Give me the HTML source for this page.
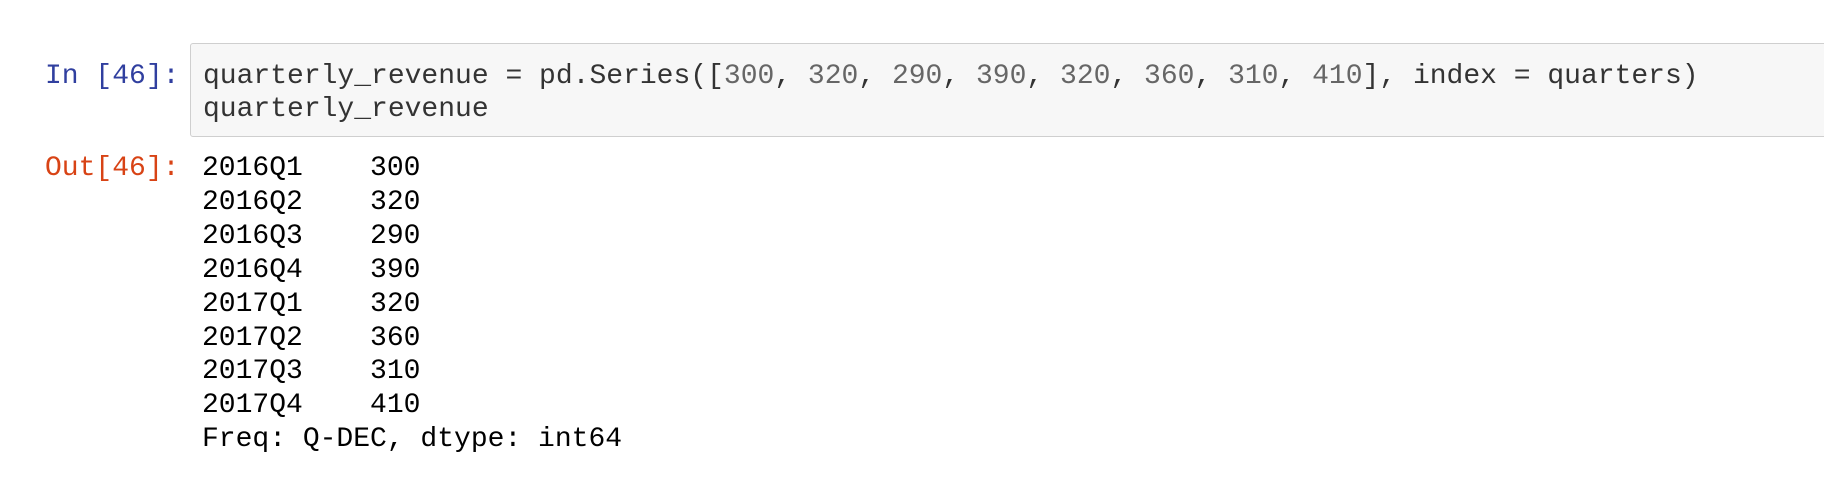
<!DOCTYPE html>
<html><head><style>
html,body{margin:0;padding:0;background:#fff;width:1824px;height:488px;overflow:hidden;position:relative}
.m{font-family:"Liberation Mono",monospace;font-size:28px;white-space:pre;position:absolute;margin:0}
.box{position:absolute;left:190px;top:43px;width:1660px;height:92px;background:#f7f7f7;border:1px solid #cfcfcf;border-radius:3px}
.in{color:#303f9f;left:45px;top:60px;line-height:33px}
.out{color:#d84315;left:45px;top:152px;line-height:33.9px}
.code{left:203px;top:60px;line-height:33px;color:#333}
.n{color:#666}
.o{left:202px;top:152px;line-height:33.9px;color:#000}
</style></head><body>
<div class="box"></div>
<div class="m in">In [46]:</div>
<div class="m code">quarterly_revenue = pd.Series([<span class="n">300</span>, <span class="n">320</span>, <span class="n">290</span>, <span class="n">390</span>, <span class="n">320</span>, <span class="n">360</span>, <span class="n">310</span>, <span class="n">410</span>], index = quarters)
quarterly_revenue</div>
<div class="m out">Out[46]:</div>
<div class="m o">2016Q1    300
2016Q2    320
2016Q3    290
2016Q4    390
2017Q1    320
2017Q2    360
2017Q3    310
2017Q4    410
Freq: Q-DEC, dtype: int64</div>
</body></html>
